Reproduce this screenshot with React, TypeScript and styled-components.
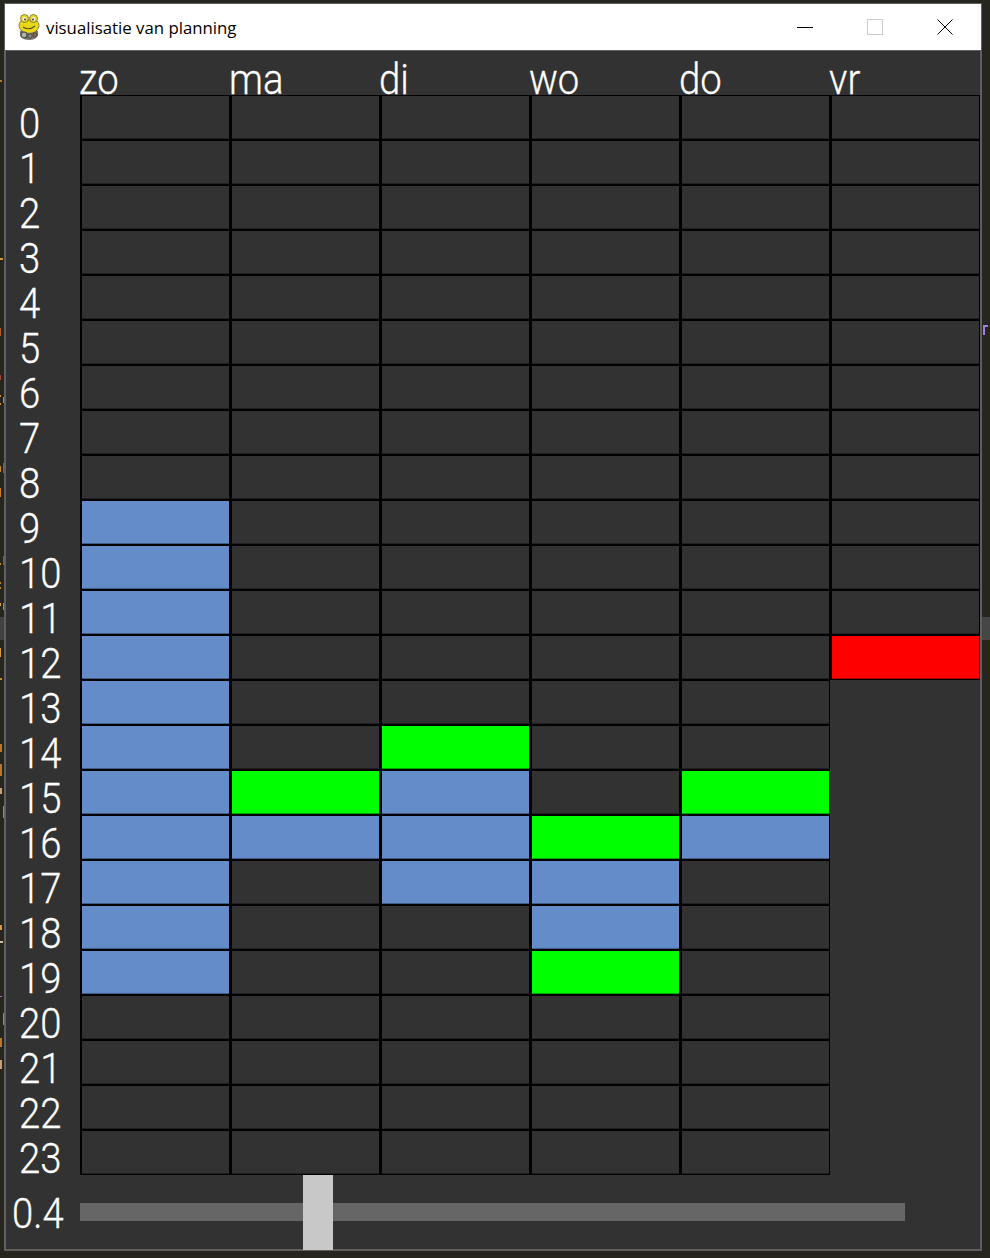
import styled, { createGlobalStyle } from "styled-components";

const days = ["zo", "ma", "di", "wo", "do", "vr"];
const hours = Array.from({ length: 24 }, (_, i) => i);

// what is planned per day: hour -> colour kind
type Kind = "empty" | "booked" | "free" | "conflict";
const planned: Record<string, Record<number, Kind>> = {
  zo: { 9: "booked", 10: "booked", 11: "booked", 12: "booked", 13: "booked", 14: "booked", 15: "booked", 16: "booked", 17: "booked", 18: "booked", 19: "booked" },
  ma: { 15: "free", 16: "booked" },
  di: { 14: "free", 15: "booked", 16: "booked", 17: "booked" },
  wo: { 16: "free", 17: "booked", 18: "booked", 19: "free" },
  do: { 15: "free", 16: "booked" },
  vr: { 12: "conflict" },
};

const cellColors: Record<Kind, string> = {
  empty: "#323232",
  booked: "#648cc8",
  free: "#00ff00",
  conflict: "#ff0000",
};

// bits of the code editor that stick out behind the window
const behind: [number, number, number, number, string][] = [
  [0, 80, 2, 2, "#b5762a"],
  [0, 258, 3, 2, "#d89a3c"],
  [0, 328, 1, 8, "#a85c20"],
  [0, 375, 1, 5, "#a8483c"],
  [0, 395, 1, 2, "#d08a30"],
  [0, 403, 1, 2, "#d08a30"],
  [3, 397, 1, 6, "#6a94c8"],
  [3, 463, 1, 10, "#4a6e96"],
  [0, 466, 1, 6, "#c88a30"],
  [0, 488, 1, 9, "#c87e20"],
  [3, 556, 1, 9, "#4a6e96"],
  [0, 563, 1, 2, "#c88a30"],
  [0, 582, 1, 2, "#c88a30"],
  [0, 587, 1, 2, "#c88a30"],
  [0, 603, 1, 3, "#e0a840"],
  [3, 603, 1, 7, "#6a94c8"],
  [0, 617, 4, 23, "#424242"],
  [0, 648, 1, 9, "#d89a3c"],
  [0, 678, 2, 2, "#c88a30"],
  [0, 744, 2, 8, "#b87a28"],
  [0, 764, 2, 12, "#b87a28"],
  [0, 788, 2, 6, "#c8a070"],
  [3, 806, 1, 12, "#6a94c8"],
  [0, 925, 2, 5, "#d89a3c"],
  [0, 941, 3, 2, "#c8c0a0"],
  [0, 996, 2, 1, "#a070c0"],
  [3, 1013, 1, 12, "#6a94c8"],
  [0, 1038, 2, 9, "#b87a28"],
  [0, 1060, 2, 9, "#c8a070"],
  [981, 617, 9, 23, "#464646"],
  [983, 325, 2, 10, "#a080e0"],
  [985, 325, 3, 2, "#a080e0"],
];

const GlobalStyle = createGlobalStyle`
  html, body {
    margin: 0;
    padding: 0;
    background: #26261f;
  }
`;

const Desktop = styled.div`
  position: relative;
  width: 990px;
  height: 1258px;
  overflow: hidden;
  padding: 3px 0 0 4px;
  box-sizing: border-box;
`;

const BehindMark = styled.i<{ $x: number; $y: number; $w: number; $h: number; $c: string }>`
  position: absolute;
  left: ${(p) => p.$x}px;
  top: ${(p) => p.$y}px;
  width: ${(p) => p.$w}px;
  height: ${(p) => p.$h}px;
  background: ${(p) => p.$c};
`;

const Window = styled.div`
  position: relative;
  width: 978px;
  height: 1248px;
  box-sizing: border-box;
  border: 1px solid #5f5f5f;
  background: #323232;
  display: flex;
  flex-direction: column;
`;

const TitleBar = styled.div`
  height: 46px;
  flex: none;
  background: #ffffff;
  display: flex;
  align-items: center;
  border-bottom: 1px solid #5f5f5f;
`;

const TitleIcon = styled.svg`
  width: 22px;
  height: 26px;
  margin-left: 13px;
  flex: none;
`;

const TitleText = styled.span`
  margin-left: 6px;
  font-family: "Open Sans", "Noto Sans", sans-serif;
  font-size: 16.8px;
  color: #000000;
  flex: 1;
`;

const WindowControls = styled.div`
  display: flex;
  margin-right: 1px;
`;

const WindowButton = styled.button`
  width: 70px;
  height: 46px;
  padding: 0;
  border: none;
  background: none;
  display: flex;
  align-items: center;
  justify-content: center;
`;

const Content = styled.div`
  flex: 1;
  display: flex;
  flex-direction: column;
  box-shadow: inset 1px 0 0 #5f5f5f, inset -1px 0 0 #5f5f5f, inset 0 -1px 0 #5f5f5f;
`;

const DayHeader = styled.div`
  display: flex;
  height: 44px;
  padding-left: 74px;
  flex: none;
`;

const BigText = styled.div`
  white-space: nowrap;
  font-family: Roboto, "Liberation Sans", sans-serif;
  font-weight: 300;
  font-size: 43px;
  color: #ffffff;
  -webkit-text-stroke: 0.3px #ffffff;
  transform: scaleX(0.89);
`;

const DayLabel = styled(BigText)`
  width: 150px;
  height: 44px;
  line-height: 56px;
  transform-origin: left center;
`;

const Planner = styled.div`
  display: flex;
  flex: none;
`;

const HourColumn = styled.div`
  width: 75px;
  flex: none;
`;

const HourLabel = styled(BigText)`
  height: 45px;
  line-height: 57px;
  padding-left: 14px;
  transform-origin: 14px center;
`;

const DayColumn = styled.div`
  width: 150px;
  flex: none;
  display: flex;
  flex-direction: column;
`;

const Cell = styled.div<{ $kind: Kind }>`
  height: 45px;
  box-sizing: border-box;
  border: 1px solid #000000;
  border-left-width: 2px;
  background: ${(p) => cellColors[p.$kind]};
  box-shadow: inset 0 -1px 0 rgba(0, 0, 0, 0.35);
`;

const SliderRow = styled.div`
  flex: 1;
  display: flex;
  align-items: flex-start;
`;

const SliderValue = styled(BigText)`
  width: 75px;
  flex: none;
  align-self: center;
  padding-left: 7px;
  box-sizing: border-box;
  transform-origin: 7px center;
`;

const SliderTrack = styled.div`
  position: relative;
  width: 825px;
  height: 18px;
  margin-top: 28px;
  background: #666666;
`;

const SliderThumb = styled.div`
  position: absolute;
  left: 223px;
  top: -28px;
  width: 30px;
  height: 75px;
  background: #c8c8c8;
`;

// Small pygame snake logo
const SnakeLogo = () => (
  <TitleIcon viewBox="0 0 22 26">
    <path d="M2 17 C1 23 5 26 11 26 C17 26 21 23 20 17 C15 13 7 13 2 17 Z" fill="#77776c" />
    <path d="M4 6 C0 9 0 14 4 17 C8 20 15 20 18 17 C22 14 22 9 18 6 Z" fill="#e8d818" stroke="#6e6a3c" strokeWidth="0.8" />
    <circle cx="6.5" cy="4.5" r="4" fill="#e8d818" stroke="#6e6a3c" strokeWidth="0.8" />
    <circle cx="15.5" cy="4.5" r="4" fill="#e8d818" stroke="#6e6a3c" strokeWidth="0.8" />
    <circle cx="6.5" cy="5" r="2" fill="#ececec" />
    <circle cx="15.5" cy="5" r="2" fill="#ececec" />
    <circle cx="7" cy="5.5" r="0.9" fill="#333333" />
    <circle cx="15" cy="5.5" r="0.9" fill="#333333" />
    <path d="M5 13 Q11 17 17 12" fill="none" stroke="#5a5420" strokeWidth="1.1" />
    <circle cx="6" cy="21" r="3" fill="#b0b0a8" stroke="#4c4c44" strokeWidth="1.2" />
    <circle cx="12" cy="22" r="2.2" fill="#8a8a80" stroke="#4c4c44" strokeWidth="1" />
    <circle cx="17" cy="21" r="2.2" fill="#8c6458" stroke="#4c4c44" strokeWidth="1" />
  </TitleIcon>
);

export default function App() {
  return (
    <>
      <GlobalStyle />
      <Desktop>
        {behind.map(([x, y, w, h, c]) => (
          <BehindMark key={`${x}-${y}`} $x={x} $y={y} $w={w} $h={h} $c={c} />
        ))}
        <Window>
          <TitleBar>
            <SnakeLogo />
            <TitleText>visualisatie van planning</TitleText>
            <WindowControls>
              <WindowButton aria-label="minimise">
                <svg width="16" height="16" viewBox="0 0 16 16">
                  <path d="M0 8.5H16" stroke="#000" strokeWidth="1" />
                </svg>
              </WindowButton>
              <WindowButton aria-label="maximise">
                <svg width="16" height="16" viewBox="0 0 16 16">
                  <rect x="0.5" y="0.5" width="15" height="15" fill="none" stroke="#cccccc" />
                </svg>
              </WindowButton>
              <WindowButton aria-label="close">
                <svg width="16" height="16" viewBox="0 0 16 16">
                  <path d="M0.5 0.5L15.5 15.5M15.5 0.5L0.5 15.5" stroke="#000" strokeWidth="1" />
                </svg>
              </WindowButton>
            </WindowControls>
          </TitleBar>
          <Content>
            <DayHeader>
              {days.map((d) => (
                <DayLabel key={d}>{d}</DayLabel>
              ))}
            </DayHeader>
            <Planner>
              <HourColumn>
                {hours.map((h) => (
                  <HourLabel key={h}>{h}</HourLabel>
                ))}
              </HourColumn>
              {days.map((d) => (
                <DayColumn key={d}>
                  {hours
                    .filter((h) => d !== "vr" || h <= 12)
                    .map((h) => (
                      <Cell key={h} $kind={planned[d][h] ?? "empty"} />
                    ))}
                </DayColumn>
              ))}
            </Planner>
            <SliderRow>
              <SliderValue>0.4</SliderValue>
              <SliderTrack>
                <SliderThumb />
              </SliderTrack>
            </SliderRow>
          </Content>
        </Window>
      </Desktop>
    </>
  );
}
